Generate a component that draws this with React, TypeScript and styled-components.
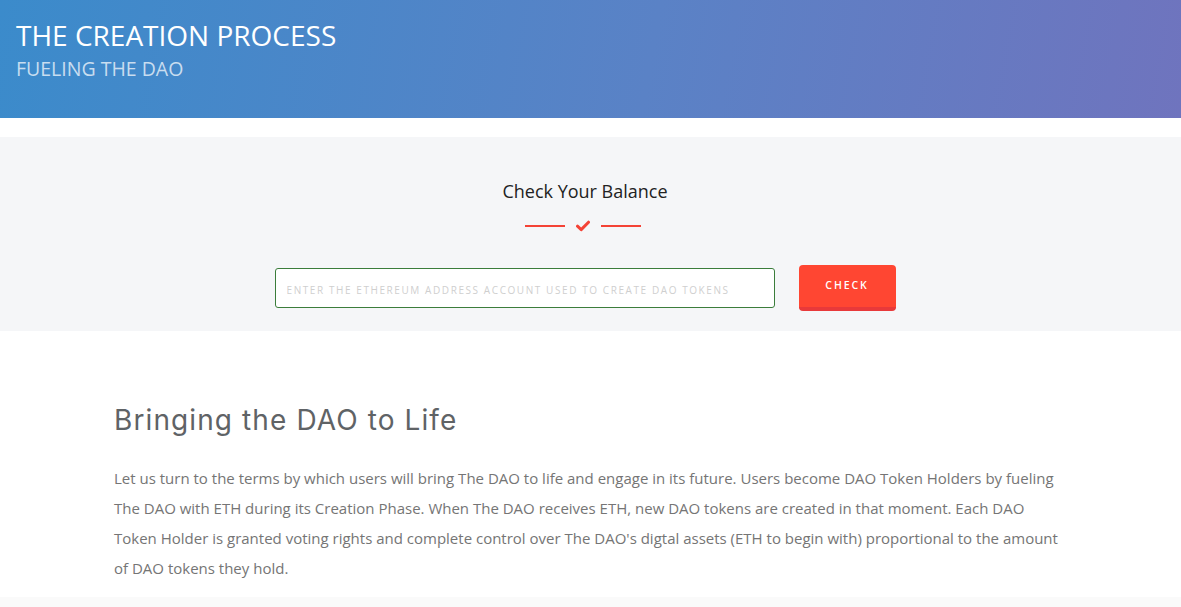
import React, { useState } from 'react';
import styled, { createGlobalStyle } from 'styled-components';

const GlobalStyle = createGlobalStyle`
  html, body {
    margin: 0;
    padding: 0;
    background: #fff;
    font-family: "Open Sans", "Liberation Sans", sans-serif;
  }
  * { box-sizing: border-box; }
`

const Header = styled.header`
  height: 118px;
  padding: 18px 16px 0;
  background: linear-gradient(100deg, #3b8bcb 0%, #5a82c6 55%, #6f74be 100%);
  color: #fff;

  h1 {
    margin: 0;
    font-size: 28px;
    font-weight: 400;
    line-height: 34px;
    text-transform: uppercase;
  }

  h2 {
    margin: 4px 0 0;
    font-size: 19.5px;
    font-weight: 400;
    line-height: 26px;
    color: rgba(255, 255, 255, 0.72);
    text-transform: uppercase;
  }
`

const BalanceSection = styled.section`
  margin-top: 19px;
  height: 194px;
  background: #f5f6f8;
  display: flex;
  flex-direction: column;
  align-items: center;
  padding: 42px 11px 0 0;

  h3 {
    margin: 0;
    font-size: 18px;
    font-weight: 400;
    line-height: 24px;
    color: #222;
  }
`

const Divider = styled.div`
  display: flex;
  align-items: center;
  gap: 11px;
  margin-top: 17px;
  margin-right: 4px;

  span {
    width: 40px;
    height: 2px;
    background: #f44336;
  }
`

const CheckForm = styled.form`
  display: flex;
  align-items: center;
  gap: 24px;
  margin-top: 33px;
`

const AddressInput = styled.input`
  width: 500px;
  height: 40px;
  border: 1px solid #3b7d3b;
  border-radius: 3px;
  background: #fff;
  padding: 3px 11px 0;
  font-family: "Open Sans", sans-serif;
  font-size: 10px;
  letter-spacing: 1.58px;
  text-transform: uppercase;
  outline: none;

  &::placeholder {
    color: #cfcfcf;
  }
`

const CheckButton = styled.button`
  width: 97px;
  height: 46px;
  border: none;
  border-bottom: 4px solid #e8393a;
  border-radius: 4px;
  background: #ff4632;
  color: #fff;
  font-family: "Open Sans", sans-serif;
  font-size: 10.5px;
  font-weight: 600;
  letter-spacing: 1.9px;
  padding: 0 0 3px;
  cursor: pointer;
`

const Content = styled.main`
  padding: 69px 0 0 114px;

  h2 {
    margin: 0;
    font-family: "Inter", "Lato", sans-serif;
    font-weight: 400;
    font-size: 28px;
    letter-spacing: 1.1px;
    line-height: 40px;
    color: #5f6366;
  }

  p {
    width: 946px;
    margin: 23px 0 0;
    font-size: 15px;
    line-height: 30px;
    color: #757575;
  }
`

const Footer = styled.footer`
  margin-top: 14px;
  height: 20px;
  background: #fafafa;
`

function CheckMark() {
  return (
    <svg width="14" height="12" viewBox="0 0 14 12">
      <path d="M1.5 6.2 L5.2 9.6 L12.5 2.2" fill="none" stroke="#f44336" strokeWidth="3" strokeLinecap="round" strokeLinejoin="round" />
    </svg>
  );
}

export default function App() {
  const [address, setAddress] = useState('');

  return (
    <>
      <GlobalStyle />
      <Header>
        <h1>The Creation Process</h1>
        <h2>Fueling the DAO</h2>
      </Header>
      <BalanceSection>
        <h3>Check Your Balance</h3>
        <Divider>
          <span />
          <CheckMark />
          <span />
        </Divider>
        <CheckForm onSubmit={e => e.preventDefault()}>
          <AddressInput
            value={address}
            onChange={e => setAddress(e.target.value)}
            placeholder='Enter the ethereum address account used to create DAO tokens'
          />
          <CheckButton type='submit'>CHECK</CheckButton>
        </CheckForm>
      </BalanceSection>
      <Content>
        <h2>Bringing the DAO to Life</h2>
        <p>
          Let us turn to the terms by which users will bring The DAO to life and engage in its future. Users become DAO Token Holders by fueling The DAO with ETH during its Creation Phase. When The DAO receives ETH, new DAO tokens are created in that moment. Each DAO Token Holder is granted voting rights and complete control over The DAO's digtal assets (ETH to begin with) proportional to the amount of DAO tokens they hold.
        </p>
      </Content>
      <Footer />
    </>
  );
}
